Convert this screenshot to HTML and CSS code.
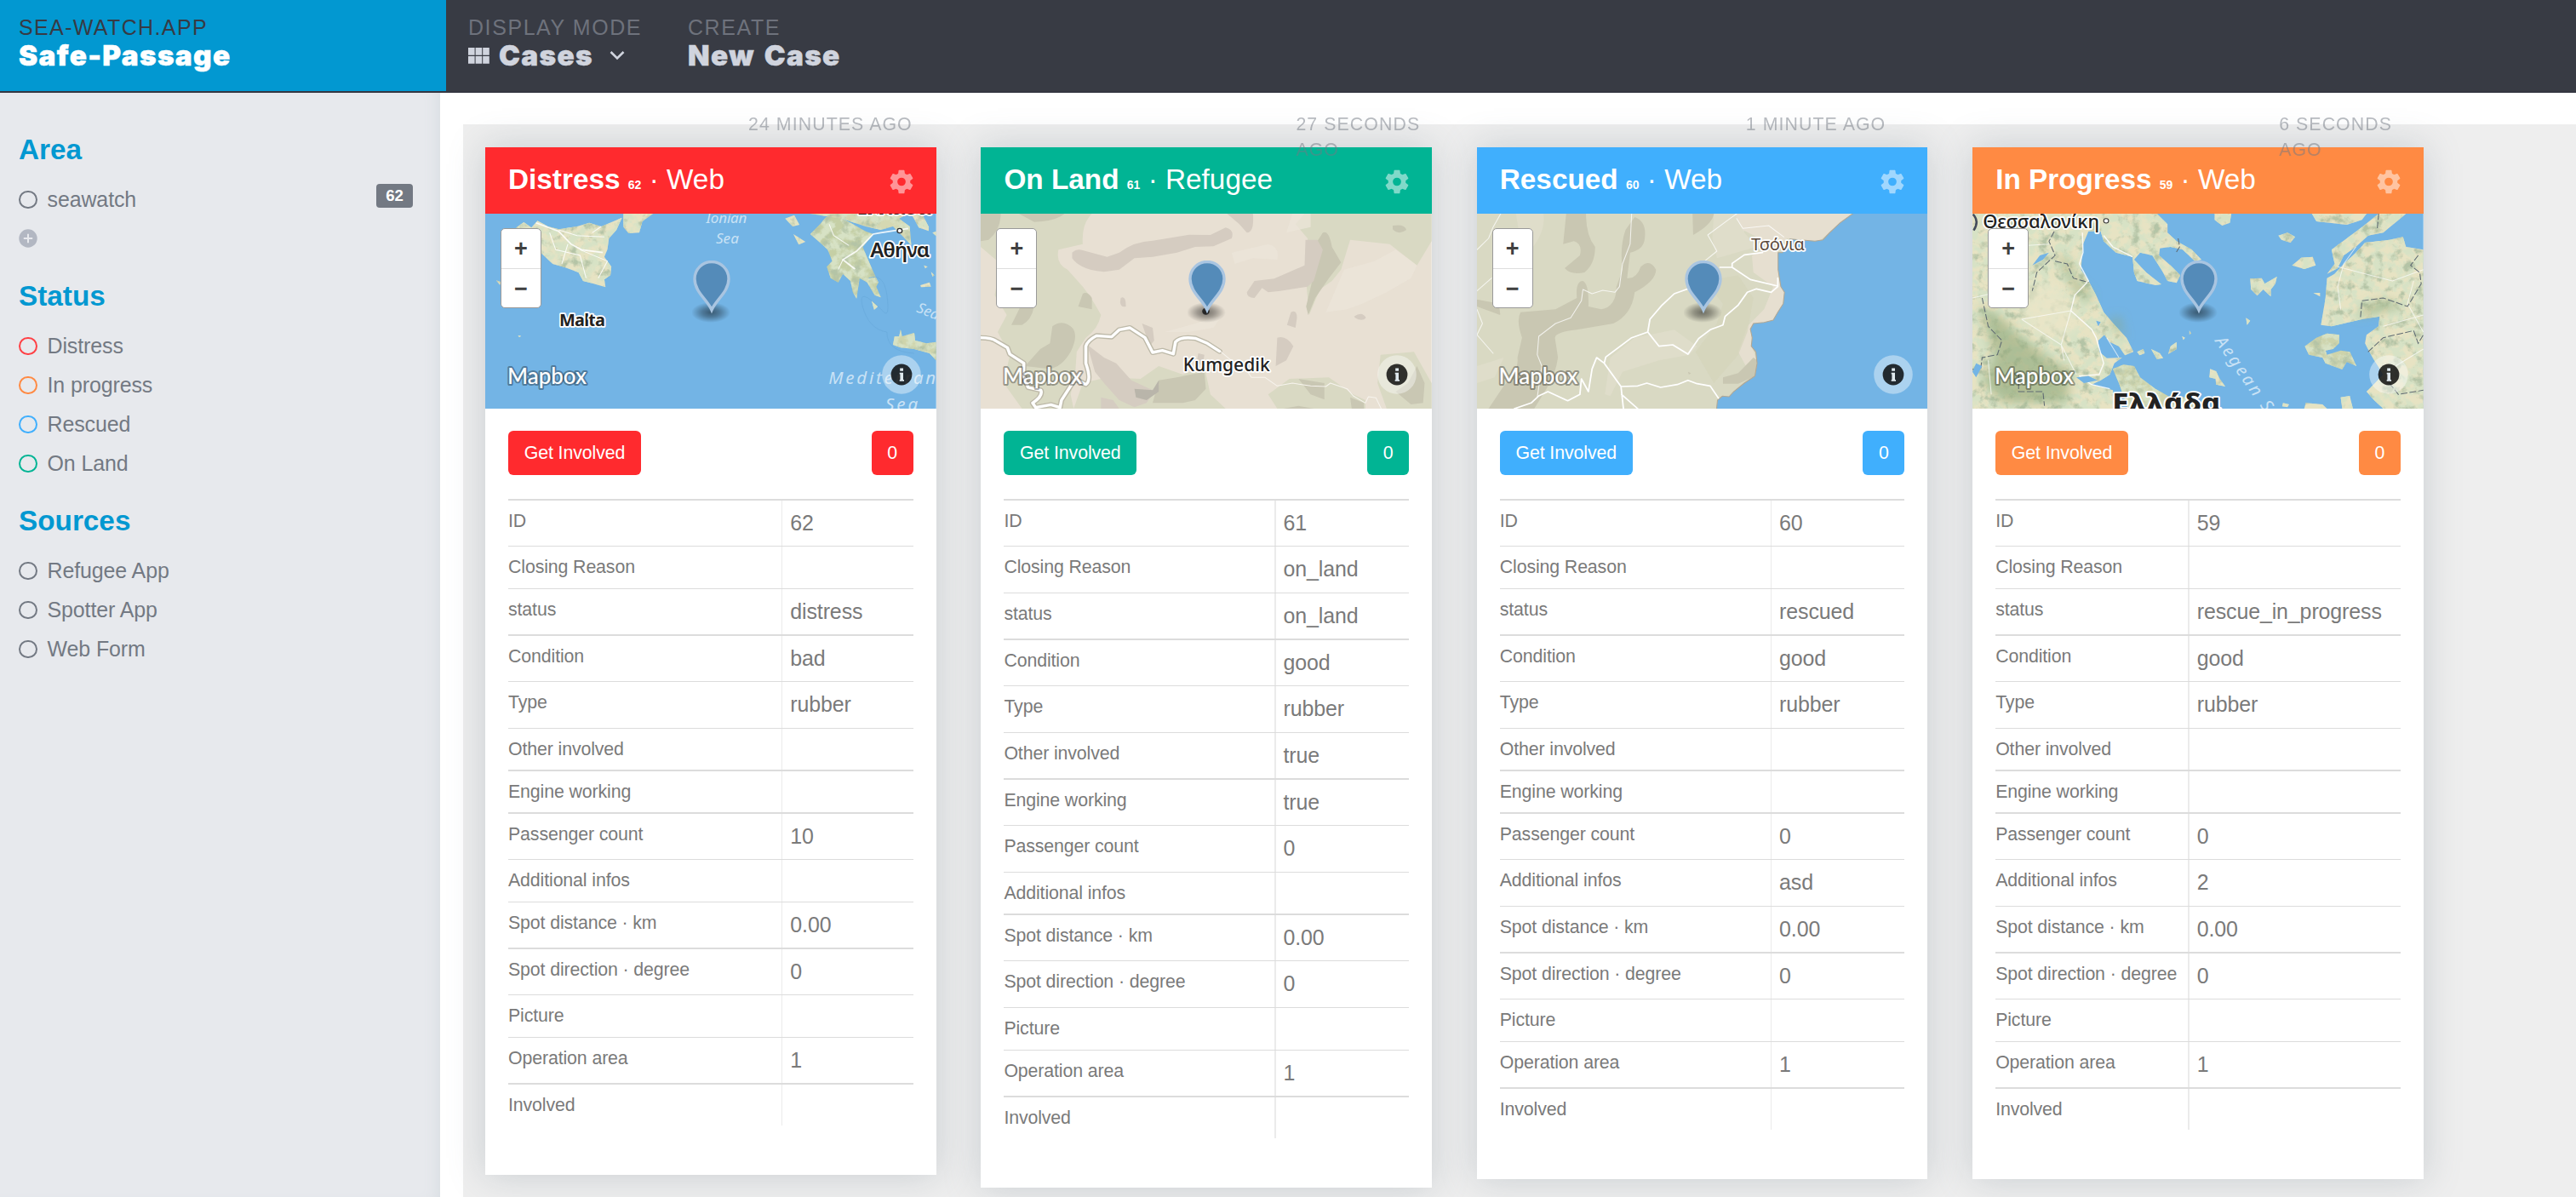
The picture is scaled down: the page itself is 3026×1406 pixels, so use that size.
FILE: index.html
```html
<!DOCTYPE html>
<html lang="en">
<head>
<meta charset="utf-8">
<title>Sea-Watch.app – Safe-Passage</title>
<link rel="stylesheet" href="styles.css">
</head>
<body>
<svg class="defs" aria-hidden="true">
  <defs>
    <radialGradient id="pin-shade"><stop offset="0" stop-color="#000" stop-opacity=".5"/><stop offset=".45" stop-color="#000" stop-opacity=".32"/><stop offset="1" stop-color="#000" stop-opacity="0"/></radialGradient>
    <filter id="relief" x="0" y="0" width="100%" height="100%">
      <feTurbulence type="fractalNoise" baseFrequency=".03" numOctaves="5" seed="7" result="n"/>
      <feColorMatrix in="n" values="0 0 0 0 .68  0 0 0 0 .76  0 0 0 0 .56  4.5 0 0 0 -1.75" result="g"/>
      <feComposite in="g" in2="SourceAlpha" operator="in" result="gc"/>
      <feColorMatrix in="n" values="0 0 0 0 .46  0 0 0 0 .55  0 0 0 0 .38  0 4 0 0 -2.1" result="d"/>
      <feComposite in="d" in2="SourceAlpha" operator="in" result="dc"/>
      <feMerge><feMergeNode in="SourceGraphic"/><feMergeNode in="gc"/><feMergeNode in="dc"/></feMerge>
    </filter>
    <filter id="slope"><feGaussianBlur stdDeviation="18"/></filter>
    <symbol id="gear" viewBox="2.2 2 19.6 20"><path d="M19.14 12.94c.04-.3.06-.61.06-.94 0-.32-.02-.64-.07-.94l2.03-1.58a.49.49 0 0 0 .12-.61l-1.92-3.32a.488.488 0 0 0-.59-.22l-2.39.96c-.5-.38-1.03-.7-1.62-.94l-.36-2.54a.484.484 0 0 0-.48-.41h-3.84c-.24 0-.43.17-.47.41l-.36 2.54c-.59.24-1.13.57-1.62.94l-2.39-.96c-.22-.08-.47 0-.59.22L2.74 8.87c-.12.21-.08.47.12.61l2.03 1.58c-.05.3-.09.63-.09.94s.02.64.07.94l-2.03 1.58a.49.49 0 0 0-.12.61l1.92 3.32c.12.22.37.29.59.22l2.39-.96c.5.38 1.03.7 1.62.94l.36 2.54c.05.24.24.41.48.41h3.84c.24 0 .44-.17.47-.41l.36-2.54c.59-.24 1.13-.56 1.62-.94l2.39.96c.22.08.47 0 .59-.22l1.92-3.32c.12-.22.07-.47-.12-.61l-2.01-1.58zM12 15.4a3.4 3.4 0 1 1 0-6.8 3.4 3.4 0 0 1 0 6.8z" fill="currentColor"/></symbol>
    <symbol id="pin" viewBox="0 0 46 74">
      <ellipse cx="22" cy="61" rx="23" ry="12" fill="url(#pin-shade)"/>
      <path d="M23 58C18 46 3 37 3 21.500a20 20 0 0 1 40 0C43 37 28 46 23 58z" fill="#548bb9" stroke="#a9c5e1" stroke-width="3.400"/>
    </symbol>
    <symbol id="info" viewBox="0 0 46 46">
      <circle cx="23" cy="23" r="22.800" fill="#fff" fill-opacity=".4"/>
      <circle cx="23" cy="23" r="12.400" fill="#000" fill-opacity=".8"/>
      <path d="M21.200 15.500h3.800v3.300h-3.800zM20.700 20.800h4.300v8.200h1v1.800h-5.300V29h.7v-6.400h-.7z" fill="#dfe9ee"/>
    </symbol>
  </defs>
</svg>

<header class="topbar">
  <div class="brand">
    <div class="eyebrow">Sea-Watch.app</div>
    <div class="title">Safe-Passage</div>
  </div>
  <div class="menu menu-mode">
    <div class="eyebrow">Display mode</div>
    <div class="title">
      <svg class="icon-grid" width="25" height="19" viewBox="0 0 25 19"><path d="M0 0h7.600v8.800H0zM8.600 0h7.600v8.800H8.600zM17.200 0h7.600v8.800h-7.600zM0 10h7.600v8.800H0zM8.600 10h7.600v8.800H8.600zM17.200 10h7.600v8.800h-7.600z" fill="currentColor"/></svg><span>Cases</span><svg class="icon-chevron" width="18" height="12" viewBox="0 0 18 12"><path d="M1.500 2L9 9.500 16.500 2" fill="none" stroke="currentColor" stroke-width="2.600"/></svg>
    </div>
  </div>
  <div class="menu">
    <div class="eyebrow">Create</div>
    <div class="title">New Case</div>
  </div>
</header>

<div class="layout">
  <nav class="sidebar">
    <section>
      <h2>Area</h2>
      <ul>
        <li><i class="dot"></i><span>seawatch</span><b class="badge">62</b></li>
        <li><svg class="add" width="22" height="22" viewBox="0 0 22 22"><circle cx="11" cy="11" r="10.700" fill="#b2b7c2"/><path d="M11 5.800v10.400M5.800 11h10.400" stroke="#e7e9ed" stroke-width="2"/></svg></li>
      </ul>
    </section>
    <section>
      <h2>Status</h2>
      <ul>
        <li><i class="dot dot-distress"></i><span>Distress</span></li>
        <li><i class="dot dot-progress"></i><span>In progress</span></li>
        <li><i class="dot dot-rescued"></i><span>Rescued</span></li>
        <li><i class="dot dot-land"></i><span>On Land</span></li>
      </ul>
    </section>
    <section>
      <h2>Sources</h2>
      <ul>
        <li><i class="dot"></i><span>Refugee App</span></li>
        <li><i class="dot"></i><span>Spotter App</span></li>
        <li><i class="dot"></i><span>Web Form</span></li>
      </ul>
    </section>
  </nav>

  <main class="board">
    <article class="card distress">
      <div class="ago">24 minutes ago</div>
      <header><h3><b>Distress</b> <small>62</small> · Web</h3><svg class="gear"><use href="#gear"/></svg></header>
      <div class="map">
        <svg class="tiles" viewBox="28 273 1484 687" preserveAspectRatio="none">
          <rect x="28" y="273" width="1484" height="687" fill="#73b4e5"/>
          <g fill="#e7e3c3" filter="url(#relief)">
            <path d="M130 322L155 303 180 322 200 298 235 318 270 328 330 318 370 305 410 318 478 287 460 330 435 360 430 400 420 425 443 460 440 490 420 505 424 532 385 520 350 510 335 480 290 462 250 450 215 415 190 380 150 345z"/>
            <path d="M483 273H580L545 300 535 340 500 342 483 320z"/>
            <path d="M64 508L80 514 76 524zM136 702L146 704 140 708z"/>
            <path fill="#c5cfa5" d="M1098 345L1130 310 1150 285 1180 280 1230 305 1280 335 1305 345 1270 390 1290 440 1310 490 1322 515 1315 530 1330 568 1310 560 1285 515 1260 500 1250 572 1238 550 1230 510 1205 485 1190 515 1165 500 1152 460 1170 440 1155 400 1130 375z"/>
            <path fill="#d5d8b2" d="M1098 273H1420L1390 290 1425 318 1430 384 1400 350 1370 318 1330 330 1280 318 1200 290 1150 282z"/>
            <path d="M1430 273H1465L1488 320 1487 334 1455 322zM1015 290L1045 278 1062 312 1040 318zM1042 345L1082 372 1060 382zM1500 340L1512 335V352zM1300 580L1320 600 1308 612zM1460 525L1490 515 1495 530 1462 532zM1472 455L1484 460 1476 466zM1495 478L1506 490 1500 495z"/>
            <path fill="#cfd4ab" d="M1370 735L1375 706 1390 706 1395 682 1400 705 1440 693 1443 720 1480 730 1512 725V790L1490 765 1440 750 1395 745z"/>
          </g>
          <g fill="none" stroke="#fff" stroke-width="3" stroke-opacity=".85">
            <path stroke-width="5" d="M195 305L270 335 310 380 345 400 415 410M1420 325L1330 340 1305 345 1250 405 1205 435 1245 468"/>
            <path d="M270 330L330 350 420 355M240 340L260 400 340 420 360 500M300 380L280 450M340 400L430 440 400 500M410 318L380 340M1160 310L1175 350 1225 385M1205 435L1190 470"/>
          </g>
          <path d="M1290 500Q1340 480 1350 560T1340 620Q1250 520 1270 600T1350 690Q1350 760 1440 765" fill="none" stroke="#68a9db" stroke-width="2"/>
          <circle cx="1392" cy="333" r="8" fill="#fff" stroke="#333" stroke-width="4"/>
          <g class="sea-label">
            <text transform="translate(755 307) scale(2.800 3)" font-size="17" textLength="48">Ionian</text>
            <text transform="translate(787 379) scale(2.800 3)" font-size="17" textLength="27">Sea</text>
            <text transform="translate(1445 618) scale(2.800 3) rotate(22)" font-size="17">Sea</text>
            <text transform="translate(1158 874) scale(2.800 3)" font-size="20.500" textLength="168">Mediterranean</text>
            <text transform="translate(1345 966) scale(2.800 3)" font-size="20.500" textLength="38">Sea</text>
          </g>
          <g class="place-label">
            <text transform="translate(272 670) scale(2.800 3)" font-size="20" font-weight="700" textLength="54">Malta</text>
            <text transform="translate(1295 425) scale(2.800 3)" font-size="24" font-weight="600" textLength="70">Αθήνα</text>
            <text transform="translate(1250 276) scale(2.800 3)" font-size="27" font-weight="700" textLength="88">Ελλάδα</text>
          </g>
          <text class="mapbox" transform="translate(101 872) scale(2.800 3)" textLength="93" lengthAdjust="spacingAndGlyphs">Mapbox</text>
        </svg>
        <div class="zoom"><button>+</button><button>−</button></div>
        <svg class="pin"><use href="#pin"/></svg><svg class="info"><use href="#info"/></svg>
      </div>
      <div class="actions"><button>Get Involved</button><button class="count">0</button></div>
      <div class="facts">
        <div><span>ID</span><em>62</em></div>
        <div><span>Closing Reason</span><em></em></div>
        <div><span>status</span><em>distress</em></div>
        <div><span>Condition</span><em>bad</em></div>
        <div><span>Type</span><em>rubber</em></div>
        <div><span>Other involved</span><em></em></div>
        <div><span>Engine working</span><em></em></div>
        <div><span>Passenger count</span><em>10</em></div>
        <div><span>Additional infos</span><em></em></div>
        <div><span>Spot distance · km</span><em>0.00</em></div>
        <div><span>Spot direction · degree</span><em>0</em></div>
        <div><span>Picture</span><em></em></div>
        <div><span>Operation area</span><em>1</em></div>
        <div><span>Involved</span><em></em></div>
      </div>
    </article>

    <article class="card land">
      <div class="ago">27 seconds ago</div>
      <header><h3><b>On Land</b> <small>61</small> · Refugee</h3><svg class="gear"><use href="#gear"/></svg></header>
      <div class="map">
        <svg class="tiles" viewBox="34 363 1484 687" preserveAspectRatio="none">
          <rect x="34" y="363" width="1484" height="687" fill="#e8e0d3"/>
          <g fill="#d9d9c3">
            <path d="M34 363H400Q365 400 370 470L290 490Q280 540 320 560L370 620Q400 660 430 720Q420 770 380 800L350 850 345 930 330 1000 340 1050H170L110 960 130 860 90 780 120 720 80 650 100 540 34 480z"/>
            <path d="M1100 363H1518V460L1470 545 1380 470 1250 455 1220 560 1190 600 1150 630 1115 720 1105 600 1110 450 1070 400z"/>
            <path d="M340 1050L370 960 450 940 560 945 620 900 700 930 770 900 790 1000 840 1050z"/>
            <path d="M980 1000L1050 945 1180 940 1260 1000 1300 1020V1050H1010zM1350 860L1460 850 1518 960V1050H1370L1340 960z"/>
          </g>
          <g fill="#c9c7b3">
            <path d="M34 363H100Q100 420 60 455L34 460zM160 363H310Q280 390 210 392zM135 755L165 690 210 690Q200 740 170 755zM270 760Q300 735 330 760T330 850Q300 905 260 910L180 900 230 840 262 820zM370 645Q385 635 400 660V700L355 690z"/>
            <path d="M1160 430Q1180 420 1190 480L1220 535 1180 590 1135 660 1112 720 1105 690 1125 600 1130 480zM1390 405Q1430 398 1435 420 1410 440 1390 418zM1470 900L1495 960 1490 1030 1450 1035 1400 990 1440 960zM620 950L680 940 770 920 775 980 740 1020 700 1030H600zM1080 945L1165 960 1165 1018 1120 1000zM1250 1010L1295 1030V1050H1255zM1030 1050L1080 1040 1130 1050z"/>
          </g>
          <g fill="#d5ccc1">
            <path d="M335 500Q350 485 370 492L450 515 490 500Q540 460 600 458L720 437 790 438 840 412Q870 420 860 450L800 478 740 480 680 500 600 515 540 520 490 560 440 568Q360 560 335 520z"/>
            <path d="M845 363H930Q935 430 910 430L885 400zM1103 455H1142L1160 490 1130 600 1110 620 1020 635 980 640 960 625 935 660Q910 660 910 640L935 600 1000 592 1100 545zM1055 710Q1075 700 1075 730L1070 765 1042 755zM1010 800Q1040 790 1063 830L1040 880 1005 900zM495 660Q512 650 512 690 495 695 493 675zM1263 725Q1290 705 1302 730 1290 745 1266 730zM385 825L440 870 480 890 530 950 600 985 625 960 580 1030 540 1045 490 1020 440 960 410 920zM430 1010L470 1020 490 1050H430zM565 750L600 765 605 810 590 830zM750 855L770 860 765 900 745 885z"/>
          </g>
          <path d="M540 980L600 985 620 950 620 990 580 1020 545 1010z" fill="#b9b5aa"/>
          <g fill="#ece5da"><path d="M860 500L980 470Q1020 480 1010 525L930 520 870 540zM1230 560L1330 530 1400 490 1470 545 1450 590 1370 640 1290 680 1240 700 1170 710zM640 780L740 750 830 720 800 765 720 780zM1060 363H1120V410L1040 430z" opacity=".7"/></g>
          <g fill="none" stroke-linejoin="round" stroke-linecap="round">
            <path stroke="#bdb9a8" stroke-width="18" d="M34 800Q70 800 85 812L122 835 130 858 176 890 175 935 190 975 232 985Q240 1005 205 1030L215 1046 265 1036 295 1046 300 1020 345 945 380 965Q400 950 380 890V830Q385 810 415 793L465 797 490 772 525 765 575 800 600 852 632 845 668 857 675 815Q690 795 740 802L780 820 820 848"/>
            <path stroke="#fff" stroke-width="10" d="M34 800Q70 800 85 812L122 835 130 858 176 890 175 935 190 975 232 985Q240 1005 205 1030L215 1046 265 1036 295 1046 300 1020 345 945 380 965Q400 950 380 890V830Q385 810 415 793L465 797 490 772 525 765 575 800 600 852 632 845 668 857 675 815Q690 795 740 802L780 820 820 848"/>
            <path stroke="#f7f4ee" stroke-width="3" d="M825 850L870 890 900 900 925 940 970 940 1010 970 1060 960 1120 970 1170 972 1185 960 1240 980 1260 1005 1300 1030 1310 1008 1335 1012 1352 1050"/>
          </g>
          <circle cx="775" cy="707" r="12" fill="#444"/>
          <g class="place-label"><text transform="translate(700 917) scale(2.800 3)" font-size="21.500" font-weight="500" textLength="102" lengthAdjust="spacingAndGlyphs">Kumgedik</text></g>
          <text class="mapbox" transform="translate(107 962) scale(2.800 3)" textLength="93" lengthAdjust="spacingAndGlyphs">Mapbox</text>
        </svg>
        <div class="zoom"><button>+</button><button>−</button></div>
        <svg class="pin"><use href="#pin"/></svg><svg class="info"><use href="#info"/></svg>
      </div>
      <div class="actions"><button>Get Involved</button><button class="count">0</button></div>
      <div class="facts">
        <div><span>ID</span><em>61</em></div>
        <div><span>Closing Reason</span><em>on_land</em></div>
        <div><span>status</span><em>on_land</em></div>
        <div><span>Condition</span><em>good</em></div>
        <div><span>Type</span><em>rubber</em></div>
        <div><span>Other involved</span><em>true</em></div>
        <div><span>Engine working</span><em>true</em></div>
        <div><span>Passenger count</span><em>0</em></div>
        <div><span>Additional infos</span><em></em></div>
        <div><span>Spot distance · km</span><em>0.00</em></div>
        <div><span>Spot direction · degree</span><em>0</em></div>
        <div><span>Picture</span><em></em></div>
        <div><span>Operation area</span><em>1</em></div>
        <div><span>Involved</span><em></em></div>
      </div>
    </article>

    <article class="card rescued">
      <div class="ago">1 minute ago</div>
      <header><h3><b>Rescued</b> <small>60</small> · Web</h3><svg class="gear"><use href="#gear"/></svg></header>
      <div class="map">
        <svg class="tiles" viewBox="42 363 1481 687" preserveAspectRatio="none">
          <rect x="42" y="363" width="1481" height="687" fill="#d9d9c3"/>
          <g fill="#dfddca"><path d="M170 363H260Q270 430 210 500L180 430zM480 870L560 800 690 772 765 830 740 860 640 880 520 920 480 1005 462 1000zM42 900L130 870 100 940 42 960zM820 363H920V430L960 480 830 520 815 450z"/></g>
          <path fill="#e6dfd0" d="M888 363H1276L1240 390 1200 430 1165 460 1060 450 1031 490 1032 590 1052 640 1045 690 1010 745 960 748 940 765 948 840 960 880 925 900 900 850 930 760 985 700 1015 620 950 570 945 510 985 490 970 450 915 420z"/>
          <g fill="#c9c7b2">
            <path d="M335 363H400Q400 440 430 480 430 540 395 570 350 580 330 555L380 510Q390 470 360 460L325 470zM560 375Q600 390 593 450 590 490 545 500L535 590Q565 595 580 550 610 520 630 560 630 600 560 640 550 720 490 750L370 772Q300 780 298 800L308 870Q300 930 270 980L230 1050H80L130 970Q180 920 175 870L190 800Q170 740 185 710L300 700 370 660Q365 600 390 600 410 610 408 690L450 700Q500 690 500 620L520 560Q510 480 530 420zM750 363H820Q815 400 752 438zM42 665L90 675Q120 680 118 720L42 690zM950 870L962 880 956 935 900 962H850V940L900 925zM735 920L745 925 738 930z"/>
          </g>
          <path fill="#d4d4bb" d="M790 600L900 580 950 660 930 780 900 860 820 960 760 850 830 750 850 680z" opacity=".7"/>
          <path fill="#73b4e5" stroke="#b0a795" stroke-width="3" d="M1276 363L1235 395 1200 430 1178 455 1152 460 1070 452 1045 500 1031 500V560L1040 620 1052 640 1048 680 1030 710 1015 738 985 746 950 750 940 770 946 800 943 830 958 850 962 890 955 935 920 960 885 990 870 1008 848 1006 832 1020 828 1060H1530V355H1290z"/>
          <g fill="none" stroke="#fff" stroke-linejoin="round" stroke-linecap="round">
            <path stroke-width="5" d="M165 1050L220 1030 245 1005 275 990 340 1022 380 1000 385 945 408 990 420 910 435 870 460 890 515 972 570 970 600 960 645 975 700 965 735 950 765 962 808 970 835 1013M515 972L523 1050M517 1000L570 1050M460 890L465 868 550 800 603 780 640 830 685 825 735 858 770 803 808 772 850 755 857 725 900 685 930 640 960 628 1008 640 1030 620V590M603 780L610 735 650 685 690 645 735 628M840 552H880L940 595 1030 618M880 552V538L920 508 980 500"/>
            <path stroke-width="3" stroke-opacity=".75" d="M120 363L95 410 80 450 42 490M42 635L90 590M550 363L545 470 520 540 510 620 495 640 455 633 420 645 390 630 385 670 350 730 300 750 245 795 240 860 255 900 240 1010M42 700L60 750 42 790 95 855M895 363L800 438 830 495 790 530M895 380L915 415 1000 405 1050 445"/>
          </g>
          <g class="place-label brown"><text transform="translate(942 492) scale(2.800 3)" font-size="20.500" textLength="63" lengthAdjust="spacingAndGlyphs">Τσόνια</text></g>
          <text class="mapbox" transform="translate(113 962) scale(2.800 3)" textLength="93" lengthAdjust="spacingAndGlyphs">Mapbox</text>
        </svg>
        <div class="zoom"><button>+</button><button>−</button></div>
        <svg class="pin"><use href="#pin"/></svg><svg class="info"><use href="#info"/></svg>
      </div>
      <div class="actions"><button>Get Involved</button><button class="count">0</button></div>
      <div class="facts">
        <div><span>ID</span><em>60</em></div>
        <div><span>Closing Reason</span><em></em></div>
        <div><span>status</span><em>rescued</em></div>
        <div><span>Condition</span><em>good</em></div>
        <div><span>Type</span><em>rubber</em></div>
        <div><span>Other involved</span><em></em></div>
        <div><span>Engine working</span><em></em></div>
        <div><span>Passenger count</span><em>0</em></div>
        <div><span>Additional infos</span><em>asd</em></div>
        <div><span>Spot distance · km</span><em>0.00</em></div>
        <div><span>Spot direction · degree</span><em>0</em></div>
        <div><span>Picture</span><em></em></div>
        <div><span>Operation area</span><em>1</em></div>
        <div><span>Involved</span><em></em></div>
      </div>
    </article>

    <article class="card progress">
      <div class="ago">6 seconds ago</div>
      <header><h3><b>In Progress</b> <small>59</small> · Web</h3><svg class="gear"><use href="#gear"/></svg></header>
      <div class="map">
        <svg class="tiles" viewBox="48 363 1484 687" preserveAspectRatio="none">
          <rect x="48" y="363" width="1484" height="687" fill="#73b4e5"/>
          <g fill="#e7e3c3" filter="url(#relief)">
            <path d="M48 363H655L690 400 690 430 720 460 770 490 802 525 780 530 740 490 700 480 665 485 662 510 700 545 732 580 720 607 690 600 670 560 640 510 600 500 580 525 620 570 670 612 650 615 590 600 580 570 575 515 520 500 480 460 470 425 430 425 412 470 405 560 430 600 455 650 480 710 520 760 555 800 578 850 550 862 530 830 500 815 482 790 462 810 465 850 490 872 540 870 515 890 500 930 470 950 440 965 510 985 520 1050H48z"/>
            <path fill="#cdd3ab" d="M510 910L545 895 580 900 600 940 650 980 700 1010 760 1010 790 1050H560L530 960zM1142 830L1180 800 1215 785 1255 790 1255 820 1235 840 1210 845 1215 860 1260 845 1290 850 1312 900 1280 885 1265 912 1210 890 1200 870 1155 860z"/>
            <path d="M845 363H900L895 395 870 405 845 385zM1055 440L1085 430 1110 445 1095 465 1065 455zM1100 545L1130 518 1168 515 1178 545 1140 558zM962 592L1000 590 1010 610 1050 585 1045 610 1030 630V655L1005 630 985 652 965 630zM1165 363H1345L1330 385 1280 402 1180 390zM1385 363H1475L1400 430 1350 440 1310 480 1270 510 1250 555 1215 575 1240 540 1230 490 1280 450 1330 410zM1532 490L1475 480 1465 445 1420 455 1340 465 1310 500 1270 540 1240 575 1215 590 1210 660 1195 755 1230 760 1330 735 1388 725 1385 760 1345 790 1340 820 1365 870 1400 930 1345 990 1370 1020 1400 1050H1532zM1260 1010L1290 1005 1300 1050H1265zM1145 1030L1200 1035 1215 1050H1140zM830 910L850 918 862 945 880 972 850 965 848 945 828 940zM590 850L610 840 615 855 598 862zM636 840L665 855 676 872 655 875zM720 815V840L692 858 700 830zM948 730L962 740 952 755zM1170 642H1192V655zM1070 1030L1090 1035 1085 1045 1068 1042zM738 795L748 800 742 808zM762 775L768 785 762 788z"/>
          </g>
          <g fill="#8fa577" fill-opacity=".6" filter="url(#slope)">
            <path d="M330 500Q380 530 380 580L440 650 430 680 390 640 350 570zM70 690Q140 710 190 780L240 820 320 890 370 910 360 1030H150L80 960 120 860zM1310 730L1340 690 1400 665 1470 690 1380 710zM530 720L550 810 500 740z"/>
          </g>
          <path fill="#e9e5c8" fill-opacity=".75" filter="url(#slope)" d="M230 620L330 600 370 680 400 760 340 800 250 790 210 730z"/>
          <g fill="none" stroke="#fff" stroke-width="4" stroke-opacity=".85" stroke-linejoin="round">
            <path d="M410 430L412 500 400 540 430 600 385 650 372 705 440 770 455 800 480 890 465 930 400 935 440 965 500 980M480 440L510 480 575 515"/>
            <path stroke-width="3" stroke-opacity=".65" d="M210 735L372 705 340 825 390 930M210 735L260 770 340 825 350 880M48 660L130 640 230 475 300 470M100 880L110 1000M1310 480L1270 540 1250 620 1260 700M1250 550L1430 600 1532 560M1400 760L1532 720M1532 840L1440 900M1500 600L1480 680 1532 780M490 800L530 870"/>
          </g>
          <g fill="none" stroke="#5f6a72" stroke-width="3" stroke-dasharray="22 7">
            <path d="M330 400L300 460 320 510 260 570 245 635M320 530L360 540 380 590 430 605M80 660L100 760 145 810 130 860 80 870 75 910 48 912M200 930V990L280 990 285 1040M725 450L730 480 718 500M1515 510L1490 545 1520 570 1525 610 1480 690 1400 660 1330 670 1325 730M1350 850L1400 800 1500 775 1515 820 1532 790M1420 960L1450 1000 1532 985M1385 363L1380 420"/>
          </g>
          <g fill="#73b4e5"><path d="M245 545L270 510 300 500 280 525zM60 890L80 900 60 940 48 920zM455 740L470 745 462 760zM390 940L430 935 460 950 415 960z"/></g>
          <g class="sea-label">
            <text transform="translate(845 812) scale(2.800 3) rotate(55)" font-size="20" letter-spacing="3">Aegean Sea</text>
          </g>
          <path d="M50 365Q72 390 52 422" fill="none" stroke="#444b5c" stroke-width="7"/>
          <circle cx="488" cy="388" r="8" fill="#fff" stroke="#333" stroke-width="3"/>
          <g class="place-label">
            <text transform="translate(82 413) scale(2.800 3)" font-size="22" font-weight="500" textLength="137">Θεσσαλονίκη</text>
            <text transform="translate(508 1062) scale(2.800 3)" font-size="30" font-weight="800" textLength="128" lengthAdjust="spacingAndGlyphs">Ελλάδα</text>
          </g>
          <text class="mapbox" transform="translate(121 962) scale(2.800 3)" textLength="93" lengthAdjust="spacingAndGlyphs">Mapbox</text>
        </svg>
        <div class="zoom"><button>+</button><button>−</button></div>
        <svg class="pin"><use href="#pin"/></svg><svg class="info"><use href="#info"/></svg>
      </div>
      <div class="actions"><button>Get Involved</button><button class="count">0</button></div>
      <div class="facts">
        <div><span>ID</span><em>59</em></div>
        <div><span>Closing Reason</span><em></em></div>
        <div><span>status</span><em>rescue_in_progress</em></div>
        <div><span>Condition</span><em>good</em></div>
        <div><span>Type</span><em>rubber</em></div>
        <div><span>Other involved</span><em></em></div>
        <div><span>Engine working</span><em></em></div>
        <div><span>Passenger count</span><em>0</em></div>
        <div><span>Additional infos</span><em>2</em></div>
        <div><span>Spot distance · km</span><em>0.00</em></div>
        <div><span>Spot direction · degree</span><em>0</em></div>
        <div><span>Picture</span><em></em></div>
        <div><span>Operation area</span><em>1</em></div>
        <div><span>Involved</span><em></em></div>
      </div>
    </article>
  </main>
</div>
</body>
</html>
```
FILE: styles.css
```css
* { box-sizing: border-box; }

html, body { height: 100%; }

body {
  margin: 0;
  display: flex;
  flex-direction: column;
  overflow: hidden;
  background: #fff;
  color: #737983;
  font: 24.960px/1.4 "Liberation Sans", Arial, sans-serif;
}

h2, h3, ul { margin: 0; padding: 0; }
button { font: inherit; padding: 0; border: 0; }
.defs { position: absolute; width: 0; height: 0; }

/* Top bar */
.topbar {
  flex: none;
  display: flex;
  height: 109px;
  background: #383b44;
  border-bottom: 2px solid #343641;
}

.brand {
  width: 524px;
  padding: 17px 22px;
  background: #0298d1;
}

.menu { padding: 17px 0 0 26px; }
.menu-mode { width: 258px; }

.eyebrow {
  line-height: 30px;
  letter-spacing: 1.600px;
  text-transform: uppercase;
  color: #6e727c;
}
.brand .eyebrow { color: #373a44; letter-spacing: 1.400px; }

.title {
  display: flex;
  align-items: center;
  font: 900 33.300px/36px Inter, "Liberation Sans", sans-serif;
  letter-spacing: 1.350px;
  word-spacing: 3px;
  -webkit-text-stroke: .5px currentColor;
  color: #d0d4de;
}
.brand .title { color: #fff; }
.icon-grid { margin-right: 11px; }
.icon-chevron { margin-left: 19px; }

/* Sidebar */
.layout { flex: 1; display: flex; min-height: 0; }

.sidebar {
  flex: none;
  width: 517px;
  padding: 47px 32px 0 22px;
  display: flex;
  flex-direction: column;
  gap: 24.700px;
  background: #e7e9ed;
  box-shadow: inset -14px 0 18px -12px #d6dce1;
}

.sidebar h2 {
  margin-bottom: 15.300px;
  font-size: 33.300px;
  line-height: 40px;
  color: #0298d1;
}
.sidebar ul { list-style: none; }
.sidebar li {
  display: flex;
  align-items: center;
  height: 46px;
  line-height: 46px;
  letter-spacing: -.1px;
}

.dot {
  width: 21.500px;
  height: 21.500px;
  margin-right: 12px;
  border: 2px solid #737983;
  border-radius: 50%;
}
.dot-distress { border-color: #ff4045; }
.dot-progress { border-color: #ff8a43; }
.dot-rescued { border-color: #40affd; }
.dot-land { border-color: #01b494; }

.badge {
  width: 43px;
  height: 28px;
  margin: -9px 0 0 auto;
  border-radius: 4px;
  background: #737983;
  color: #fff;
  font-size: 18.670px;
  line-height: 27px;
  text-align: center;
}

/* Board */
.board {
  flex: 1;
  display: flex;
  align-items: flex-start;
  gap: 52.700px;
  margin: 37px 0 0 27px;
  padding: 27px 0 0 26px;
  background: #eee;
}

.card {
  position: relative;
  flex: none;
  width: 529.700px;
  padding-bottom: 58px;
  background: #fff;
  box-shadow: 0 0 40px rgba(112, 128, 144, .3);
}
.distress { --tone: #ff2a2e; --col: 321px; --ago: 309px; }
.land { --tone: #01b494; --col: 317.800px; --ago: 370px; }
.rescued { --tone: #40affd; --col: 318px; --ago: 316px; }
.progress { --tone: #ff8a43; --col: 226.300px; --ago: 360px; }

.ago {
  position: absolute;
  z-index: 1;
  top: -42px;
  left: var(--ago);
  max-width: 205px;
  font-size: 21.330px;
  line-height: 30px;
  letter-spacing: 1.070px;
  text-transform: uppercase;
  opacity: .5;
}
.land .ago, .progress .ago { width: 160px; }

.card header {
  display: flex;
  justify-content: space-between;
  height: 78px;
  padding: 0 27px;
  background: var(--tone);
  color: #fff;
}
.card h3 { font-size: 33.330px; line-height: 75px; font-weight: 400; }
.card small { font-size: 14px; font-weight: 700; }
.gear { width: 28px; height: 29px; margin-top: 26px; opacity: .5; }

/* Map */
.map { position: relative; height: 229px; overflow: hidden; }
.tiles { display: block; width: 100%; height: 100%; }
.tiles text { font-family: "Noto Sans", sans-serif; }
.sea-label { fill: #c9e2f5; font-style: italic; }
.place-label { fill: #222; stroke: #fff; stroke-width: 3.500px; paint-order: stroke; stroke-linejoin: round; }
.brown { fill: #5d4a3c; }
.tiles .mapbox {
  font: 500 26px Lato, sans-serif;
  fill: #fff;
  stroke: rgba(0, 0, 0, .32);
  stroke-width: 4px;
  stroke-linejoin: round;
  paint-order: stroke;
}

.zoom {
  position: absolute;
  top: 17px;
  left: 18px;
  width: 48px;
  height: 94px;
  border: 1px solid #999;
  border-radius: 5px;
  background: #fff;
  overflow: hidden;
}
.zoom button {
  display: block;
  width: 100%;
  height: 46px;
  background: none;
  color: #404040;
  font: 700 27px/46px "Liberation Sans", sans-serif;
}
.zoom button + button { border-top: 1px solid #ddd; }

.pin { position: absolute; left: 243px; top: 55px; width: 46px; height: 74px; }
.info { position: absolute; left: 466px; top: 166px; width: 46px; height: 46px; }

/* Actions */
.actions {
  display: flex;
  justify-content: space-between;
  padding: 26px 27px 28.400px;
}
.actions button {
  width: 156px;
  height: 52px;
  padding-top: 2px;
  border-radius: 6px;
  background: var(--tone);
  color: #fff;
  font-size: 21.330px;
  letter-spacing: -.1px;
}
.actions .count { width: 49px; }

/* Facts table: the gaps between white cells form the rules */
.facts {
  display: flex;
  flex-direction: column;
  gap: 1.330px;
  margin: 0 27px;
  padding-top: 1.330px;
  background: #dcdcdc;
  color: #7a7a7a;
}
.facts div {
  display: grid;
  grid-template-columns: var(--col) 1fr;
  column-gap: 1.330px;
  min-height: 48.370px;
  background: #ebebeb;
}
.facts span, .facts em { background: #fff; font-style: normal; letter-spacing: -.12px; }
.facts span { padding-top: 1px; font-size: 21.330px; line-height: 47.370px; }
.facts em { padding-left: 9px; line-height: 53.340px; }
```
